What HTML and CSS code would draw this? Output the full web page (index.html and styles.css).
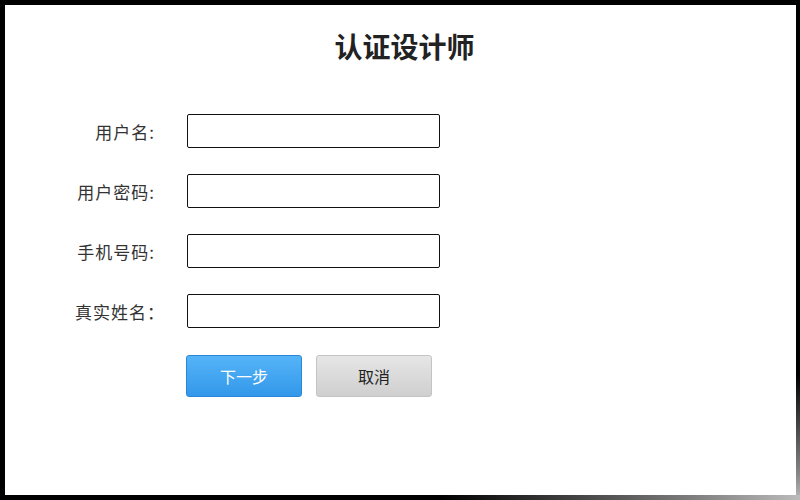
FILE: index.html
```html
<!DOCTYPE html>
<html lang="zh-CN">
<head>
    <meta charset="UTF-8">
    <meta name="viewport" content="width=device-width, initial-scale=1.0">
    <title>认证设计师</title>
    <link rel="stylesheet" href="styles.css">
</head>
<body>
    <div class="frame">
        <h1 class="title">认证设计师</h1>

        <form class="form" onsubmit="return false;">
            <div class="row">
                <label class="label" for="username">用户名:</label>
                <input type="text" id="username" class="field">
            </div>
            <div class="row">
                <label class="label" for="password">用户密码:</label>
                <input type="password" id="password" class="field">
            </div>
            <div class="row">
                <label class="label" for="phone">手机号码:</label>
                <input type="text" id="phone" class="field">
            </div>
            <div class="row">
                <label class="label" for="realname">真实姓名<span class="wide-colon">：</span></label>
                <input type="text" id="realname" class="field">
            </div>
            <div class="actions">
                <button type="submit" class="btn btn-primary">下一步</button>
                <button type="button" class="btn btn-default">取消</button>
            </div>
        </form>
    </div>
</body>
</html>
```

FILE: styles.css
```css
html, body {
    margin: 0;
    height: 100%;
}

body {
    box-sizing: border-box;
    padding: 5px 4px 5px 5px;
    font-family: "Noto Sans CJK SC", "Noto Sans", sans-serif;
    color: #333;
    /* dark frame, fading out toward the bottom right corner */
    background:
        linear-gradient(to right, #000 55%, #777 85%, #bbb) bottom / 100% 5px no-repeat,
        linear-gradient(to bottom, #000 75%, #888 95%, #bbb) right / 4px 100% no-repeat,
        #000;
}

.frame {
    height: 100%;
    background-color: #fff;
}

.title {
    margin: 0;
    padding: 22px 0 0 8px;
    font-size: 28px;
    line-height: 38px;
    font-weight: bold;
    text-align: center;
    color: #222;
}

.form {
    margin-top: 49px;
    padding-left: 48px;
}

.row {
    display: flex;
    align-items: center;
    gap: 32px;
    margin-bottom: 26px;
}

.label {
    width: 102px;
    text-align: right;
    font-size: 17px;
    letter-spacing: 1px;
    color: #333;
    white-space: nowrap;
}

.wide-colon {
    margin-right: -10px;
}

.field {
    box-sizing: border-box;
    width: 253px;
    height: 34px;
    margin: 0;
    padding: 0 8px;
    border: 1px solid #111;
    border-radius: 2px;
    font-size: 15px;
    outline: none;
}

.actions {
    display: flex;
    gap: 14px;
    margin-top: 27px;
    padding-left: 133px;
}

.btn {
    box-sizing: border-box;
    width: 116px;
    height: 42px;
    border-radius: 3px;
    font-family: inherit;
    font-size: 16px;
    cursor: pointer;
}

.btn-primary {
    background: linear-gradient(#55b4f8, #3398ea);
    border: 1px solid #2a86d6;
    color: #fff;
}

.btn-default {
    background: linear-gradient(#e6e6e6, #cfcfcf);
    border: 1px solid #c4c4c4;
    color: #222;
}
```
